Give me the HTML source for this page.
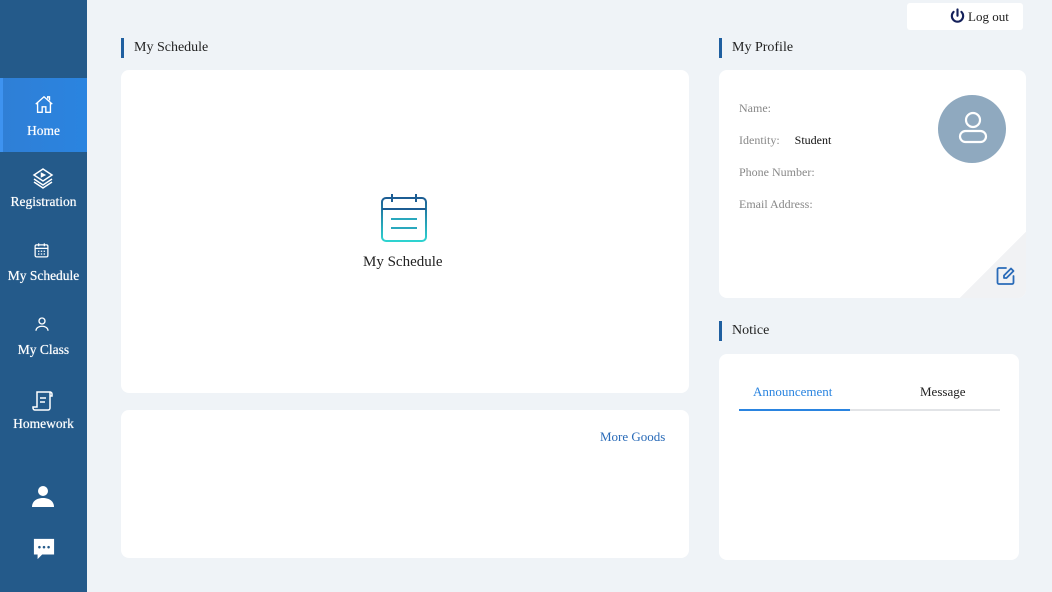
<!DOCTYPE html>
<html><head><meta charset="utf-8"><style>
*{margin:0;padding:0;box-sizing:border-box}
body{width:1052px;height:592px;background:#eff3f7;font-family:"Liberation Serif",serif;position:relative;overflow:hidden}
.side{position:absolute;left:0;top:0;width:87px;height:592px;background:#245a8a}
.nl{position:absolute;left:0;width:87px;text-align:center;color:#fff;font-size:13.5px;text-shadow:0 0 0.6px #fff}
.ic{position:absolute}
.active{position:absolute;left:0;background:linear-gradient(90deg,#2f7fd6,#2a84e0);top:78px;width:87px;height:74px;border-left:3px solid #3e93f0}
.card{position:absolute;background:#fff;border-radius:8px}
.title{position:absolute;font-size:14px;color:#222;padding-left:10px;border-left:3px solid #1f5fa0;line-height:20px}
.lbl{position:absolute;left:739px;font-size:12px;color:#888}
</style></head><body>
<div class="side">
<div class="active"></div>
<svg class="ic" style="left:33px;top:94px" width="22" height="22" viewBox="0 0 24 24" fill="none" stroke="#fff" stroke-width="1.5"><path d="M3 11 12 3l9 8M5 9v11h5v-6h4v6h5V9M16 5V3h2v4"/></svg>
<div class="nl" style="top:123px">Home</div>
<svg class="ic" style="left:31px;top:166px" width="24" height="24" viewBox="0 0 24 24" fill="none" stroke="#fff" stroke-width="1.5"><path d="M12 3 3 9l9 6 9-6zM3 13l9 6 9-6M3 16l9 6 9-6"/><path d="M10.5 7.5v3l3-1.5z" fill="#fff"/></svg>
<div class="nl" style="top:194px">Registration</div>
<svg class="ic" style="left:33px;top:242px" width="17" height="17" viewBox="0 0 24 24" fill="none" stroke="#fff" stroke-width="1.8"><rect x="3" y="4" width="18" height="17" rx="2"/><path d="M3 9h18M8 2v4M16 2v4M7 13h2M11 13h2M15 13h2M7 17h2M11 17h2M15 17h2"/></svg>
<div class="nl" style="top:268px">My Schedule</div>
<svg class="ic" style="left:33px;top:315px" width="18" height="18" viewBox="0 0 24 24" fill="none" stroke="#fff" stroke-width="1.8"><circle cx="12" cy="8" r="4"/><path d="M4 21c0-4 4-6 8-6s8 2 8 6"/></svg>
<div class="nl" style="top:342px">My Class</div>
<svg class="ic" style="left:31px;top:389px" width="24" height="24" viewBox="0 0 24 24" fill="none" stroke="#fff" stroke-width="1.5"><path d="M6 3h13v16a2 2 0 0 1-2 2H4a2 2 0 0 1-2-2v-1h4zM19 3a2 2 0 0 1 2 2v2h-2M9 9h6M9 13h5"/></svg>
<div class="nl" style="top:416px">Homework</div>
<svg style="position:absolute;left:31px;top:484px" width="24" height="24" viewBox="0 0 24 24" fill="#fff"><circle cx="12" cy="7" r="5"/><path d="M1 23c0-6 5-9 11-9s11 3 11 9z"/></svg>
<svg style="position:absolute;left:33px;top:538px" width="22" height="22" viewBox="0 0 24 24"><path d="M1 1h22v17H10l-5 5v-5H1z" fill="#fff"/><circle cx="7" cy="10" r="1.4" fill="#245a8a"/><circle cx="12" cy="10" r="1.4" fill="#245a8a"/><circle cx="17" cy="10" r="1.4" fill="#245a8a"/></svg>
</div>

<div style="position:absolute;left:907px;top:3px;width:116px;height:27px;background:#fff;border-radius:3px;font-size:13px;color:#222;line-height:27px;padding-left:43px">
<svg style="position:absolute;left:42px;top:5px" width="17" height="17" viewBox="0 0 24 24" fill="none" stroke="#14205a" stroke-width="3" stroke-linecap="round"><path d="M12 2v9M6.5 5.5a8 8 0 1 0 11 0"/></svg><span style="margin-left:18px">Log out</span></div>

<div class="title" style="left:121px;top:38px">My Schedule</div>
<div class="card" style="left:121px;top:70px;width:568px;height:323px"></div>
<svg style="position:absolute;left:380px;top:193px" width="48" height="50" viewBox="0 0 48 50" fill="none" stroke-width="2"><defs><linearGradient id="g" x1="0" y1="0" x2="0" y2="1"><stop offset="0" stop-color="#1c5d93"/><stop offset="1" stop-color="#2ed3d0"/></linearGradient></defs><rect x="2" y="5" width="44" height="43" rx="4" stroke="url(#g)"/><path d="M2 16h44M12 1v8M36 1v8" stroke="#1c5d93"/><path d="M11 26h26M11 35h26" stroke="#2aa8bd"/></svg>
<div style="position:absolute;left:363px;top:254px;font-size:15px;color:#222">My Schedule</div>

<div class="card" style="left:121px;top:410px;width:568px;height:148px"></div>
<div style="position:absolute;left:600px;top:429px;font-size:13px;color:#2a6bb8">More Goods</div>

<div class="title" style="left:719px;top:38px">My Profile</div>
<div class="card" style="left:719px;top:70px;width:307px;height:228px;overflow:hidden">
<div style="position:absolute;right:0;bottom:0;width:66px;height:66px;background:linear-gradient(135deg,#fff 50%,#f1f2f4 50%)"></div></div>
<div class="lbl" style="top:101px">Name:</div>
<div class="lbl" style="top:133px">Identity: <span style="color:#111;margin-left:12px">Student</span></div>
<div class="lbl" style="top:165px">Phone Number:</div>
<div class="lbl" style="top:197px">Email Address:</div>
<div style="position:absolute;left:938px;top:95px;width:68px;height:68px;border-radius:50%;background:#8fa9bf"></div>
<svg style="position:absolute;left:957px;top:110px" width="32" height="36" viewBox="0 0 32 36" fill="none" stroke="#fff" stroke-width="2.2"><circle cx="16" cy="10" r="7"/><rect x="3" y="21" width="26" height="11" rx="5.5"/></svg>
<svg style="position:absolute;left:996px;top:266px" width="20" height="20" viewBox="0 0 20 20" fill="none" stroke="#2a6bb8" stroke-width="1.8" stroke-linecap="round" stroke-linejoin="round"><path d="M10 2H3a1.5 1.5 0 0 0-1.5 1.5v13A1.5 1.5 0 0 0 3 18h13a1.5 1.5 0 0 0 1.5-1.5V10"/><path d="M15 2.5l2.5 2.5-7 7H8V9.5z"/></svg>

<div class="title" style="left:719px;top:321px">Notice</div>
<div class="card" style="left:719px;top:354px;width:300px;height:206px"></div>
<div style="position:absolute;left:753px;top:384px;font-size:13px;color:#2a84e0">Announcement</div>
<div style="position:absolute;left:920px;top:384px;font-size:13px;color:#222">Message</div>
<div style="position:absolute;left:739px;top:409px;width:261px;height:2px;background:#e2e4e7"></div>
<div style="position:absolute;left:739px;top:409px;width:111px;height:2px;background:#2a84e0"></div>
</body></html>
